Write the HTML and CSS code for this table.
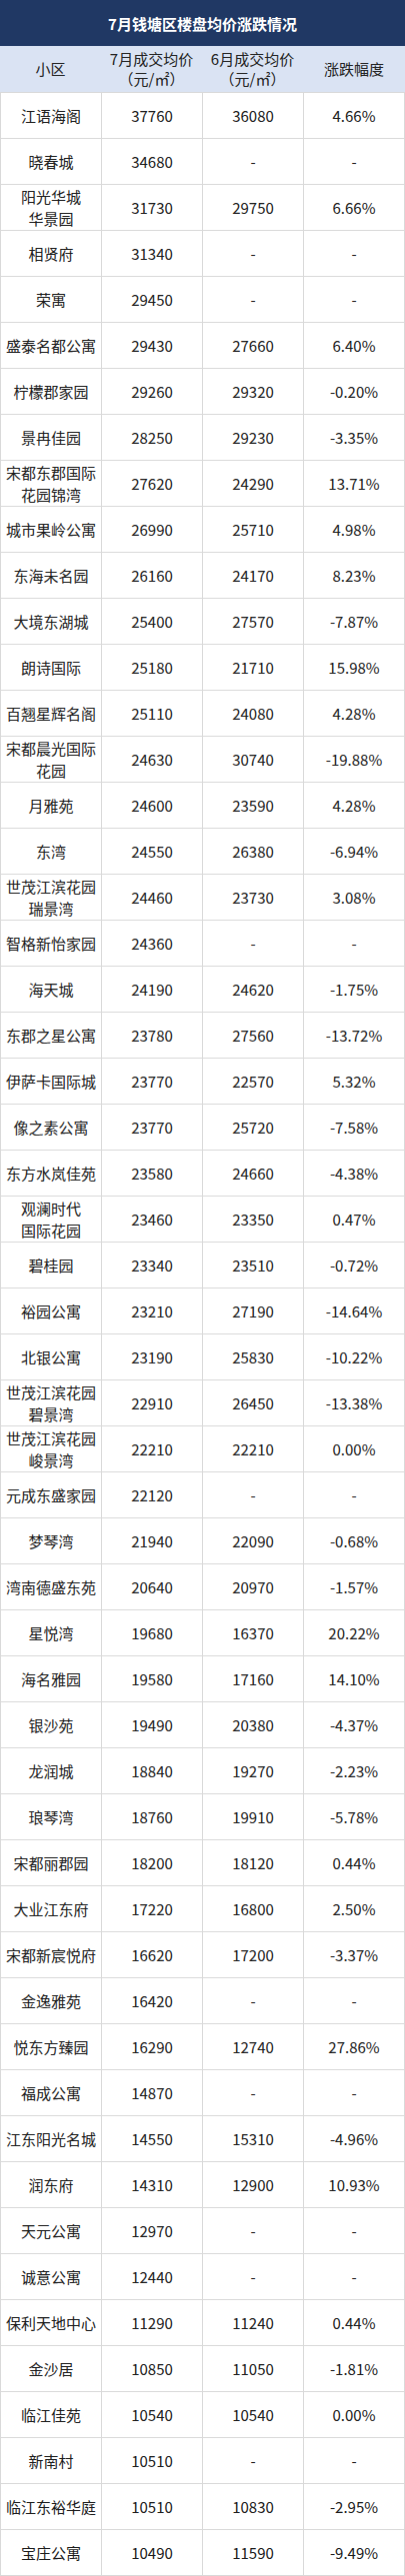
FILE: index.html
```html
<!DOCTYPE html>
<html lang="zh-CN">
<head>
<meta charset="utf-8">
<title>7月钱塘区楼盘均价涨跌情况</title>
<link rel="stylesheet" href="styles.css">
</head>
<body>
<div class="sheet">
  <div class="title">7月钱塘区楼盘均价涨跌情况</div>
  <div class="head">
    <div class="hc">小区</div>
    <div class="hc">7月成交均价<br>（元/㎡）</div>
    <div class="hc">6月成交均价<br>（元/㎡）</div>
    <div class="hc">涨跌幅度</div>
  </div>
  <div class="row"><div class="c">江语海阁</div><div class="c">37760</div><div class="c">36080</div><div class="c">4.66%</div></div>
  <div class="row"><div class="c">晓春城</div><div class="c">34680</div><div class="c">-</div><div class="c">-</div></div>
  <div class="row"><div class="c">阳光华城<br>华景园</div><div class="c">31730</div><div class="c">29750</div><div class="c">6.66%</div></div>
  <div class="row"><div class="c">相贤府</div><div class="c">31340</div><div class="c">-</div><div class="c">-</div></div>
  <div class="row"><div class="c">荣寓</div><div class="c">29450</div><div class="c">-</div><div class="c">-</div></div>
  <div class="row"><div class="c">盛泰名都公寓</div><div class="c">29430</div><div class="c">27660</div><div class="c">6.40%</div></div>
  <div class="row"><div class="c">柠檬郡家园</div><div class="c">29260</div><div class="c">29320</div><div class="c">-0.20%</div></div>
  <div class="row"><div class="c">景冉佳园</div><div class="c">28250</div><div class="c">29230</div><div class="c">-3.35%</div></div>
  <div class="row"><div class="c">宋都东郡国际<br>花园锦湾</div><div class="c">27620</div><div class="c">24290</div><div class="c">13.71%</div></div>
  <div class="row"><div class="c">城市果岭公寓</div><div class="c">26990</div><div class="c">25710</div><div class="c">4.98%</div></div>
  <div class="row"><div class="c">东海未名园</div><div class="c">26160</div><div class="c">24170</div><div class="c">8.23%</div></div>
  <div class="row"><div class="c">大境东湖城</div><div class="c">25400</div><div class="c">27570</div><div class="c">-7.87%</div></div>
  <div class="row"><div class="c">朗诗国际</div><div class="c">25180</div><div class="c">21710</div><div class="c">15.98%</div></div>
  <div class="row"><div class="c">百翘星辉名阁</div><div class="c">25110</div><div class="c">24080</div><div class="c">4.28%</div></div>
  <div class="row"><div class="c">宋都晨光国际<br>花园</div><div class="c">24630</div><div class="c">30740</div><div class="c">-19.88%</div></div>
  <div class="row"><div class="c">月雅苑</div><div class="c">24600</div><div class="c">23590</div><div class="c">4.28%</div></div>
  <div class="row"><div class="c">东湾</div><div class="c">24550</div><div class="c">26380</div><div class="c">-6.94%</div></div>
  <div class="row"><div class="c">世茂江滨花园<br>瑞景湾</div><div class="c">24460</div><div class="c">23730</div><div class="c">3.08%</div></div>
  <div class="row"><div class="c">智格新怡家园</div><div class="c">24360</div><div class="c">-</div><div class="c">-</div></div>
  <div class="row"><div class="c">海天城</div><div class="c">24190</div><div class="c">24620</div><div class="c">-1.75%</div></div>
  <div class="row"><div class="c">东郡之星公寓</div><div class="c">23780</div><div class="c">27560</div><div class="c">-13.72%</div></div>
  <div class="row"><div class="c">伊萨卡国际城</div><div class="c">23770</div><div class="c">22570</div><div class="c">5.32%</div></div>
  <div class="row"><div class="c">像之素公寓</div><div class="c">23770</div><div class="c">25720</div><div class="c">-7.58%</div></div>
  <div class="row"><div class="c">东方水岚佳苑</div><div class="c">23580</div><div class="c">24660</div><div class="c">-4.38%</div></div>
  <div class="row"><div class="c">观澜时代<br>国际花园</div><div class="c">23460</div><div class="c">23350</div><div class="c">0.47%</div></div>
  <div class="row"><div class="c">碧桂园</div><div class="c">23340</div><div class="c">23510</div><div class="c">-0.72%</div></div>
  <div class="row"><div class="c">裕园公寓</div><div class="c">23210</div><div class="c">27190</div><div class="c">-14.64%</div></div>
  <div class="row"><div class="c">北银公寓</div><div class="c">23190</div><div class="c">25830</div><div class="c">-10.22%</div></div>
  <div class="row"><div class="c">世茂江滨花园<br>碧景湾</div><div class="c">22910</div><div class="c">26450</div><div class="c">-13.38%</div></div>
  <div class="row"><div class="c">世茂江滨花园<br>峻景湾</div><div class="c">22210</div><div class="c">22210</div><div class="c">0.00%</div></div>
  <div class="row"><div class="c">元成东盛家园</div><div class="c">22120</div><div class="c">-</div><div class="c">-</div></div>
  <div class="row"><div class="c">梦琴湾</div><div class="c">21940</div><div class="c">22090</div><div class="c">-0.68%</div></div>
  <div class="row"><div class="c">湾南德盛东苑</div><div class="c">20640</div><div class="c">20970</div><div class="c">-1.57%</div></div>
  <div class="row"><div class="c">星悦湾</div><div class="c">19680</div><div class="c">16370</div><div class="c">20.22%</div></div>
  <div class="row"><div class="c">海名雅园</div><div class="c">19580</div><div class="c">17160</div><div class="c">14.10%</div></div>
  <div class="row"><div class="c">银沙苑</div><div class="c">19490</div><div class="c">20380</div><div class="c">-4.37%</div></div>
  <div class="row"><div class="c">龙润城</div><div class="c">18840</div><div class="c">19270</div><div class="c">-2.23%</div></div>
  <div class="row"><div class="c">琅琴湾</div><div class="c">18760</div><div class="c">19910</div><div class="c">-5.78%</div></div>
  <div class="row"><div class="c">宋都丽郡园</div><div class="c">18200</div><div class="c">18120</div><div class="c">0.44%</div></div>
  <div class="row"><div class="c">大业江东府</div><div class="c">17220</div><div class="c">16800</div><div class="c">2.50%</div></div>
  <div class="row"><div class="c">宋都新宸悦府</div><div class="c">16620</div><div class="c">17200</div><div class="c">-3.37%</div></div>
  <div class="row"><div class="c">金逸雅苑</div><div class="c">16420</div><div class="c">-</div><div class="c">-</div></div>
  <div class="row"><div class="c">悦东方臻园</div><div class="c">16290</div><div class="c">12740</div><div class="c">27.86%</div></div>
  <div class="row"><div class="c">福成公寓</div><div class="c">14870</div><div class="c">-</div><div class="c">-</div></div>
  <div class="row"><div class="c">江东阳光名城</div><div class="c">14550</div><div class="c">15310</div><div class="c">-4.96%</div></div>
  <div class="row"><div class="c">润东府</div><div class="c">14310</div><div class="c">12900</div><div class="c">10.93%</div></div>
  <div class="row"><div class="c">天元公寓</div><div class="c">12970</div><div class="c">-</div><div class="c">-</div></div>
  <div class="row"><div class="c">诚意公寓</div><div class="c">12440</div><div class="c">-</div><div class="c">-</div></div>
  <div class="row"><div class="c">保利天地中心</div><div class="c">11290</div><div class="c">11240</div><div class="c">0.44%</div></div>
  <div class="row"><div class="c">金沙居</div><div class="c">10850</div><div class="c">11050</div><div class="c">-1.81%</div></div>
  <div class="row"><div class="c">临江佳苑</div><div class="c">10540</div><div class="c">10540</div><div class="c">0.00%</div></div>
  <div class="row"><div class="c">新南村</div><div class="c">10510</div><div class="c">-</div><div class="c">-</div></div>
  <div class="row"><div class="c">临江东裕华庭</div><div class="c">10510</div><div class="c">10830</div><div class="c">-2.95%</div></div>
  <div class="row last"><div class="c">宝庄公寓</div><div class="c">10490</div><div class="c">11590</div><div class="c">-9.49%</div></div>
</div>
</body>
</html>
```
FILE: styles.css
```css
html, body {
  margin: 0;
  padding: 0;
  background: #ffffff;
}

.sheet {
  width: 405px;
  font-family: "Noto Sans CJK SC", "Noto Sans", "DejaVu Sans", sans-serif;
  font-size: 15px;
  color: #1a1a1a;
}

.title {
  height: 46px;
  background: #203864;
  color: #ffffff;
  font-weight: bold;
  font-size: 15px;
  display: flex;
  align-items: center;
  justify-content: center;
}

.head {
  height: 46px;
  background: #dae3f3;
  display: grid;
  grid-template-columns: 101px 101px 101px 102px;
}

.hc {
  display: flex;
  align-items: center;
  justify-content: center;
  text-align: center;
  line-height: 20px;
  color: #222222;
}

.row {
  display: grid;
  grid-template-columns: 101px 101px 101px 101px;
  border-top: 1px solid #d9d9d9;
  border-left: 1px solid #d9d9d9;
  height: 45px;
}

.row.last {
  border-bottom: 1px solid #d9d9d9;
}

.c {
  border-right: 1px solid #d9d9d9;
  display: flex;
  align-items: center;
  justify-content: center;
  text-align: center;
  line-height: 22px;
  white-space: nowrap;
}
```
